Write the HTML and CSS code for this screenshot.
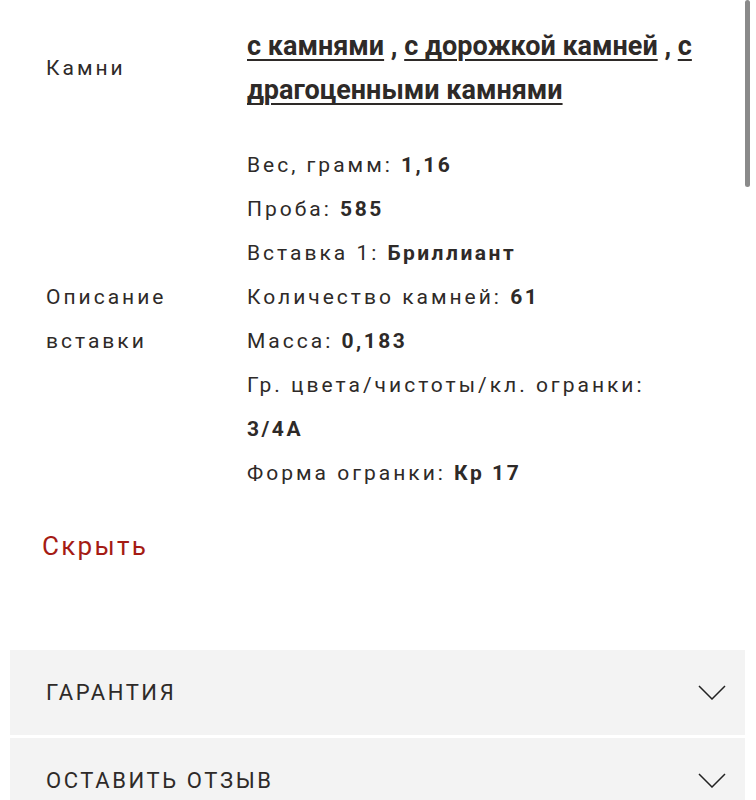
FILE: index.html
```html
<!DOCTYPE html>
<html lang="ru">
<head>
<meta charset="utf-8">
<link rel="stylesheet" href="styles.css">
</head>
<body>
<div class="page">
  <div class="specs">
    <div class="row">
      <div class="label">Камни</div>
      <div class="value links"><a href="#">с камнями</a> , <a href="#">с дорожкой камней</a> , <a href="#">с драгоценными камнями</a></div>
    </div>
    <div class="row">
      <div class="label">Описание вставки</div>
      <div class="value desc">
        <div>Вес, грамм: <b>1,16</b></div>
        <div>Проба: <b>585</b></div>
        <div>Вставка 1: <b>Бриллиант</b></div>
        <div>Количество камней: <b>61</b></div>
        <div>Масса: <b>0,183</b></div>
        <div>Гр. цвета/чистоты/кл. огранки: <b>3/4A</b></div>
        <div>Форма огранки: <b>Кр 17</b></div>
      </div>
    </div>
  </div>
  <a class="hide" href="#">Скрыть</a>
  <div class="accordion">
    <div class="acc-item"><span>ГАРАНТИЯ</span><svg class="chev" viewBox="0 0 28 15" width="28" height="15"><path d="M1 1 L14 14 L27 1" fill="none" stroke="#222" stroke-width="1.5"/></svg></div>
    <div class="acc-item"><span>ОСТАВИТЬ ОТЗЫВ</span><svg class="chev" viewBox="0 0 28 15" width="28" height="15"><path d="M1 1 L14 14 L27 1" fill="none" stroke="#222" stroke-width="1.5"/></svg></div>
  </div>
</div>
<div class="scrollthumb"></div>
</body>
</html>
```

FILE: styles.css
```css
html, body {
  margin: 0;
  padding: 0;
  background: #fff;
  overflow: hidden;
}
body {
  font-family: Roboto, "Noto Sans", sans-serif;
  color: #2e2a28;
}
.page {
  width: 756px;
  height: 800px;
  overflow: hidden;
}
.specs {
  padding: 24px 0 0 46px;
  display: flex;
  flex-direction: column;
  gap: 31px;
}
.row {
  display: grid;
  grid-template-columns: 201px 452px;
  align-items: center;
}
.label {
  font-size: 21px;
  line-height: 44px;
  letter-spacing: 3px;
  color: #2e2a28;
  width: 150px;
}
.links {
  font-weight: 700;
  font-size: 27px;
  line-height: 44px;
  letter-spacing: 0;
  color: #2e2a28;
}
.links a {
  color: #2e2a28;
  text-decoration: underline;
  text-decoration-thickness: 2px;
  text-underline-offset: 4px;
}
.desc {
  font-size: 21px;
  line-height: 44px;
  letter-spacing: 3px;
}
.desc b {
  font-weight: 700;
  letter-spacing: 2.5px;
}
.hide {
  display: block;
  margin: 31px 0 0 42px;
  font-size: 26px;
  line-height: 40px;
  letter-spacing: 2.3px;
  color: #a51b14;
  text-decoration: none;
  width: 120px;
}
.accordion {
  margin: 84px 11px 0 10px;
  display: flex;
  flex-direction: column;
  gap: 3px;
}
.acc-item {
  background: #f3f3f3;
  height: 85px;
  display: flex;
  align-items: center;
  justify-content: space-between;
  padding: 0 19px 0 36px;
  font-size: 22px;
  letter-spacing: 2.6px;
  color: #2e2a28;
}
.chev {
  display: block;
}
.scrollthumb {
  position: absolute;
  top: 0;
  left: 745px;
  width: 5px;
  height: 187px;
  background: #8a8a8a;
  border-radius: 3px;
}
```
